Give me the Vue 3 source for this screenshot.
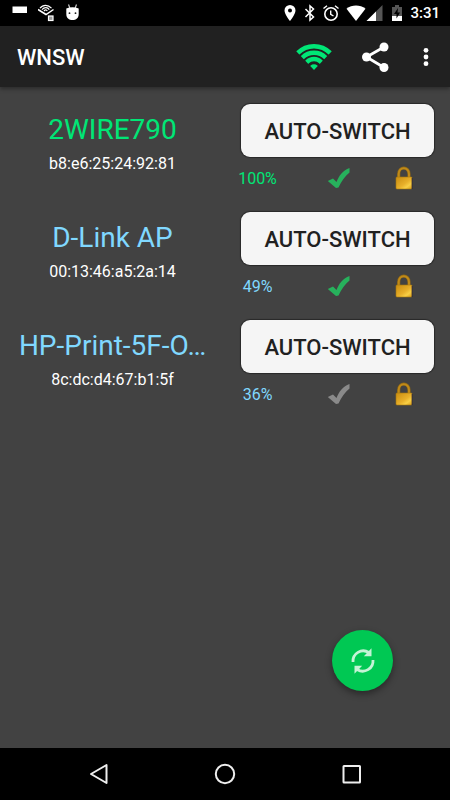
<script setup>
const networks = [
  { name: '2WIRE790', mac: 'b8:e6:25:24:92:81', strength: 100, known: true, connected: true },
  { name: 'D-Link AP', mac: '00:13:46:a5:2a:14', strength: 49, known: true, connected: false },
  { name: 'HP-Print-5F-O…', mac: '8c:dc:d4:67:b1:5f', strength: 36, known: false, connected: false },
]
</script>

<template>
  <div class="screen">
    <div class="status-bar">
      <div class="notices">
        <svg width="16" height="20" viewBox="0 0 16 20" aria-hidden="true">
          <rect x="0.5" y="3.5" width="14.5" height="6.5" fill="#fff" />
        </svg>
        <svg width="18" height="20" viewBox="0 0 18 20" fill="none" stroke="#fff" aria-hidden="true">
          <path d="M0 6.500 8 11.500 15.500 6.500" stroke-width="1.500" />
          <path d="M2 5.200C5 1.300 10 1.300 13.500 5.200M4 6.600C6.500 3.700 9.500 4 11.300 6.600M6 8C7.300 6.400 8.500 6.700 9.300 8" stroke-width="1.200" />
          <rect x="10.500" y="13" width="4.500" height="4.500" fill="#999" stroke-width="1.200" />
        </svg>
        <svg width="16" height="20" viewBox="0 0 16 20" aria-hidden="true">
          <path d="M2.500 1.500 4 5.500M10.500 1.500 9 5.500" stroke="#ccc" stroke-width="1.200" />
          <path d="M.3 5.500Q6.500 3 12.700 5.500V11C12.700 15 10 17 6.500 17S.3 15 .3 11Z" fill="#fff" />
          <circle cx="3.500" cy="10.200" r="0.900" fill="#222" />
          <circle cx="9.500" cy="10.200" r="0.900" fill="#222" />
        </svg>
      </div>
      <div class="system">
        <svg class="pin" width="12" height="18" viewBox="0 0 12 18" aria-hidden="true">
          <path fill="#fff" fill-rule="evenodd" d="M6 1A5.500 5.500 0 0 0 .5 6.500C.5 10.500 6 17 6 17S11.500 10.500 11.500 6.500A5.500 5.500 0 0 0 6 1ZM6 4.500A2 2 0 1 1 6 8.500A2 2 0 0 1 6 4.500Z" />
        </svg>
        <svg class="bluetooth" width="12" height="18" viewBox="0 0 12 18" fill="none" stroke="#fff" stroke-width="1.500" aria-hidden="true">
          <path d="M1.500 5 9.500 13 6 16V2L9.500 5 1.500 13" />
        </svg>
        <svg class="alarm" width="18" height="18" viewBox="0 0 18 18" fill="none" stroke="#fff" aria-hidden="true">
          <circle cx="9" cy="10" r="6.200" stroke-width="1.600" />
          <path d="M1.500 4.500 5 1.700M16.500 4.500 13 1.700M8.700 6.500V10.300L11.500 12" stroke-width="1.400" />
        </svg>
        <svg width="20" height="18" viewBox="0 0 20 18" aria-hidden="true">
          <path fill="#fff" d="M.5 4.800C6 .5 14 .5 19.500 4.800L10 17Z" />
        </svg>
        <svg class="cell" width="17" height="18" viewBox="0 0 17 18" aria-hidden="true">
          <path fill="#555" d="M16.500 1V17H.5Z" />
          <path fill="#fff" d="M10 7.500V17H.5Z" />
        </svg>
        <svg class="battery" width="12" height="18" viewBox="0 0 12 18" aria-hidden="true">
          <path fill="#555" d="M1 3H4V1H8V3H11V12H1Z" />
          <path fill="#fff" d="M1 12H11V17H1Z" />
          <path fill="#000" d="M7 4 3 10H5.500V14.500L9 8.500H6.500Z" />
        </svg>
        <span class="clock">3:31</span>
      </div>
    </div>

    <header class="app-bar">
      <h1>WNSW</h1>
      <div class="actions">
        <button class="icon-button" aria-label="Wi-Fi">
          <svg width="36" height="27" viewBox="0 0 36 27" aria-hidden="true">
            <clipPath id="fan"><path d="M18 27-1 7V-2H37V7Z" /></clipPath>
            <g clip-path="url(#fan)" fill="none" stroke="#00e676" stroke-width="4.500">
              <circle cx="18" cy="26" r="22.800" />
              <circle cx="18" cy="26" r="16.300" />
              <circle cx="18" cy="26" r="9.900" />
              <circle cx="18" cy="26" r="2.400" stroke-width="4.800" />
            </g>
          </svg>
        </button>
        <button class="icon-button share" aria-label="Share">
          <svg width="28" height="32" viewBox="0 0 28 32" aria-hidden="true">
            <path d="M23 6 5.500 16 23 26.500" fill="none" stroke="#fff" stroke-width="2.800" />
            <g fill="#fff">
              <circle cx="23" cy="6" r="4.500" />
              <circle cx="5.500" cy="16" r="4.500" />
              <circle cx="23" cy="26.500" r="4.500" />
            </g>
          </svg>
        </button>
        <button class="icon-button" aria-label="More options">
          <svg width="8" height="20" viewBox="0 0 8 20" fill="#fff" aria-hidden="true">
            <circle cx="4" cy="3.300" r="2.400" />
            <circle cx="4" cy="10" r="2.400" />
            <circle cx="4" cy="16.700" r="2.400" />
          </svg>
        </button>
      </div>
    </header>

    <main>
      <svg class="defs" width="0" height="0" aria-hidden="true">
        <linearGradient id="brass" x1="0" y1="0" x2="1" y2="1">
          <stop offset="0" stop-color="#c88c10" />
          <stop offset="0.550" stop-color="#e8b02a" />
          <stop offset="0.750" stop-color="#f8cf45" />
          <stop offset="1" stop-color="#d59a18" />
        </linearGradient>
      </svg>
      <ul class="networks">
        <li v-for="n in networks" :key="n.mac" class="network" :class="{ connected: n.connected }">
          <div class="identity">
            <h2>{{ n.name }}</h2>
            <p>{{ n.mac }}</p>
          </div>
          <div class="controls">
            <button class="switch">AUTO-SWITCH</button>
            <div class="details">
              <span class="strength">{{ n.strength }}%</span>
              <svg class="check" :class="{ known: n.known }" width="24" height="22" viewBox="0 0 24 22" aria-hidden="true">
                <path d="M.8 14 6 11.500 9.500 15C12 8.500 16 3.500 22.500 1V5.500C18 9 14.500 14.500 11.500 20.500L9 21Z" />
              </svg>
              <svg width="18" height="24" viewBox="0 0 18 24" aria-hidden="true">
                <path d="M3.700 12V8C3.700 0 14 0 14 8V12" fill="none" stroke="#8e6716" stroke-width="3.200" />
                <path d="M3.700 12V8C3.700 .3 14 .3 14 8V12" fill="none" stroke="#c08a18" stroke-width="2" />
                <rect x="1" y="11" width="16" height="12" rx="1" fill="url(#brass)" stroke="#a9780f" stroke-width="0.600" />
                <path d="M17.200 12V23" stroke="#1d2045" stroke-width="0.800" />
              </svg>
            </div>
          </div>
        </li>
      </ul>
      <button class="fab" aria-label="Refresh">
        <svg width="26" height="28" viewBox="0 0 26 28" aria-hidden="true">
          <g fill="none" stroke="#c4f3d6" stroke-width="2.800">
            <path d="M3 15A10.300 10.300 0 0 1 18.800 5.500" />
            <path d="M23 13A10.300 10.300 0 0 1 7.200 22.500" />
          </g>
          <path fill="#c4f3d6" d="M21.500 1.300V9.300H13.800ZM4.500 26.700V18.700H12.200Z" />
        </svg>
      </button>
    </main>

    <nav class="nav-bar">
      <button class="icon-button" aria-label="Back">
        <svg width="22" height="22" viewBox="0 0 22 22" fill="none" stroke="#eee" stroke-width="2" stroke-linejoin="round" aria-hidden="true">
          <path d="M18.500 2V20L3 11Z" />
        </svg>
      </button>
      <button class="icon-button" aria-label="Home">
        <svg width="22" height="22" viewBox="0 0 22 22" fill="none" stroke="#eee" stroke-width="2" aria-hidden="true">
          <circle cx="11" cy="11" r="9.200" />
        </svg>
      </button>
      <button class="icon-button" aria-label="Recent apps">
        <svg width="22" height="22" viewBox="0 0 22 22" fill="none" stroke="#eee" stroke-width="2" aria-hidden="true">
          <rect x="3.500" y="3" width="16.500" height="16.500" rx="0.500" />
        </svg>
      </button>
    </nav>
  </div>
</template>

<style>
body {
  margin: 0;
  background: #424242;
}
</style>

<style scoped>
.screen {
  display: flex;
  flex-direction: column;
  min-height: 100vh;
  background: #424242;
  color: #fff;
  font-family: Roboto, "Liberation Sans", sans-serif;
}

svg {
  display: block;
  flex: none;
}

h1, h2, p, ul {
  margin: 0;
  padding: 0;
  list-style: none;
}

button {
  border: 0;
  padding: 0;
  font: inherit;
  cursor: pointer;
}

.icon-button {
  background: none;
}

.status-bar {
  display: flex;
  align-items: center;
  justify-content: space-between;
  height: 26px;
  padding: 0 10px 0 12px;
  background: #000;
}

.notices,
.system {
  display: flex;
  align-items: center;
}

.notices {
  gap: 10px;
}

.pin {
  margin-right: 8px;
}

.bluetooth {
  margin-right: 6px;
}

.alarm {
  margin-right: 6px;
}

.cell {
  margin-right: 8px;
}

.battery {
  margin-right: 7px;
}

.clock {
  font-size: 15px;
  font-weight: 500;
  line-height: 26px;
}

.app-bar {
  z-index: 1;
  display: flex;
  align-items: center;
  justify-content: space-between;
  height: 61px;
  padding: 0 20px 0 17px;
  background: #212121;
  box-shadow: 0 2px 4px rgba(0, 0, 0, 0.35);
}

.app-bar h1 {
  padding-top: 2px;
  font-size: 22px;
  font-weight: 500;
}

.actions {
  display: flex;
  align-items: center;
}

.share {
  margin: 0 33px 0 29px;
}

main {
  display: flex;
  flex: 1;
  flex-direction: column;
  justify-content: space-between;
}

.defs {
  position: absolute;
}

.network {
  display: grid;
  grid-template-columns: 1fr 1fr;
  height: 108px;
}

.identity {
  min-width: 0;
  padding: 25px 16px 0;
  text-align: center;
}

.identity h2 {
  overflow: hidden;
  color: #80d8ff;
  font-size: 28px;
  font-weight: 400;
  line-height: 36px;
  text-overflow: ellipsis;
  white-space: nowrap;
}

.identity p {
  padding-top: 6px;
  font-size: 16px;
  line-height: 20px;
}

.controls {
  padding-top: 17px;
}

.switch {
  display: block;
  width: calc(100% - 32px);
  height: 53px;
  margin: 0 16px;
  padding-top: 2px;
  border-radius: 9px;
  background: #f5f5f5;
  box-shadow: 0 0 1px 1px rgba(0, 0, 0, 0.4);
  color: #212121;
  font-size: 22px;
  font-weight: 500;
}

.details {
  display: grid;
  grid-template-columns: 2fr 3fr 1fr;
  align-items: center;
  justify-items: center;
  padding: 9px 30px 0 0;
}

.strength {
  padding-top: 2px;
  color: #80d8ff;
  font-size: 16px;
  line-height: 22px;
}

.connected h2,
.connected .strength {
  color: #00e676;
}

.check {
  fill: #8a8a8a;
}

.check.known {
  fill: #27b15c;
}

.fab {
  display: grid;
  place-items: center;
  align-self: flex-end;
  width: 61px;
  height: 61px;
  margin: 0 57px 57px 0;
  border-radius: 50%;
  background: #00c853;
  box-shadow: 0 3px 7px rgba(0, 0, 0, 0.4);
}

.nav-bar {
  display: flex;
  align-items: center;
  justify-content: space-between;
  height: 52px;
  padding: 0 88px;
  background: #000;
}
</style>
